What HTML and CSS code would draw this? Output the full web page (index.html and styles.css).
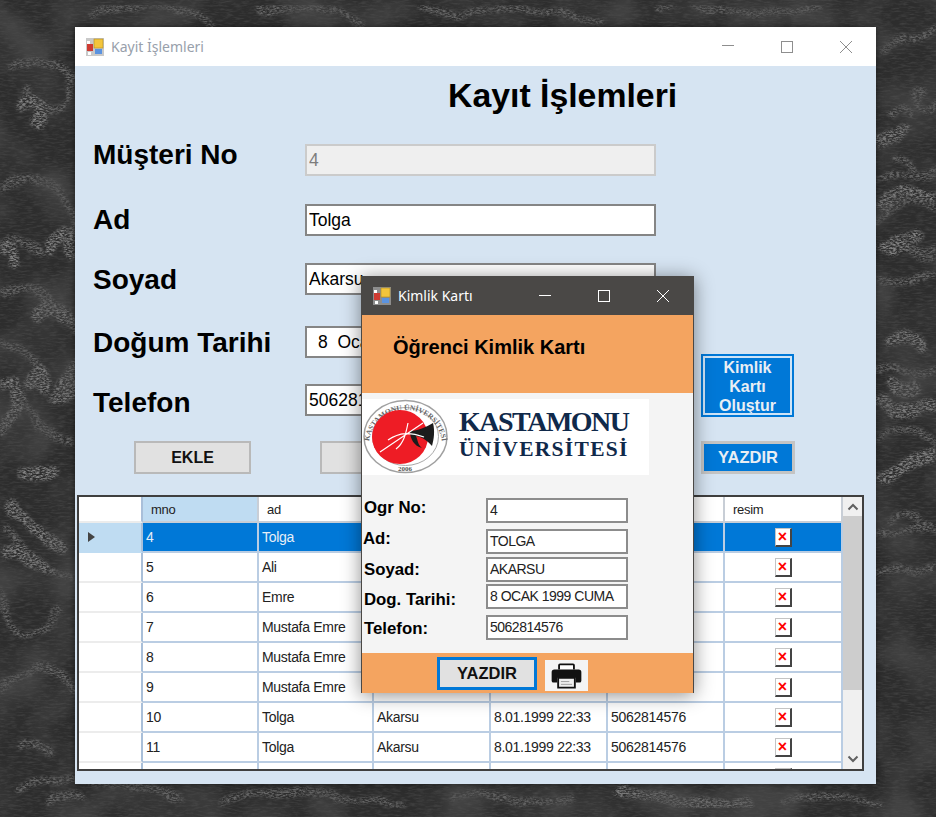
FILE: index.html
```html
<!DOCTYPE html>
<html lang="tr">
<head>
    <meta charset="UTF-8">
    <title>Kayıt İşlemleri</title>
    <link rel="stylesheet" href="styles.css">
</head>
<body>
    <!-- wallpaper -->
    <svg class="wallpaper" viewBox="0 0 936 817" aria-hidden="true">
        <defs>
            <filter id="grain" x="0" y="0" width="100%" height="100%">
                <feTurbulence type="fractalNoise" baseFrequency="0.03" numOctaves="2" seed="4" result="wobble"/>
                <feDisplacementMap in="SourceGraphic" in2="wobble" scale="16" xChannelSelector="R" yChannelSelector="G" result="moved"/>
                <feGaussianBlur in="moved" stdDeviation="1.8" result="soft"/>
                <feTurbulence type="fractalNoise" baseFrequency="0.3 0.75" numOctaves="3" seed="9"/>
                <feColorMatrix values="0 0 0 0 1  0 0 0 0 1  0 0 0 0 1  3 0 0 0 -1.1" result="streak"/>
                <feComposite in="soft" in2="streak" operator="in"/>
            </filter>
            <filter id="cloth" x="0" y="0" width="100%" height="100%">
                <feTurbulence type="fractalNoise" baseFrequency="0.12 0.55" numOctaves="3" seed="3"/>
                <feColorMatrix values="0 0 0 0 0.6  0 0 0 0 0.6  0 0 0 0 0.6  1.2 0 0 0 -0.5"/>
            </filter>
            <filter id="shade" x="0" y="0" width="100%" height="100%">
                <feTurbulence type="fractalNoise" baseFrequency="0.018" numOctaves="2" seed="12"/>
                <feColorMatrix values="0 0 0 0 0.08  0 0 0 0 0.08  0 0 0 0 0.08  3 0 0 0 -1.2"/>
            </filter>
        </defs>
        <rect width="936" height="817" filter="url(#cloth)" opacity="0.22"/>
        <g class="swirls" filter="url(#grain)">
            <path d="M10 72C40 52 78 58 70 98 58 118 28 112 24 88"/>
            <path d="M0 190C30 160 70 180 75 240"/>
            <path class="wide" d="M20 108C34 96 50 100 40 120"/>
            <path d="M5 240C18 232 34 240 40 252"/>
            <path class="wide" d="M50 248C62 226 72 232 74 250"/>
            <path class="wide" d="M0 245C12 240 16 250 14 262"/>
            <path d="M0 292C24 282 60 300 74 330"/>
            <path class="wide" d="M38 314C46 300 62 306 68 318"/>
            <path d="M3 345C20 350 38 362 50 380"/>
            <path class="wide" d="M0 386C12 380 26 392 20 406"/>
            <path class="wide" d="M32 380C40 366 48 372 44 386"/>
            <path class="wide" d="M58 395L72 372V396Z"/>
            <path class="wide" d="M2 430C16 416 20 396 14 382"/>
            <path d="M22 400C30 420 38 440 70 440"/>
            <path class="wide" d="M22 472C34 474 46 474 54 470"/>
            <path class="wide" d="M12 506C20 520 40 530 60 545"/>
            <path d="M6 528C24 560 50 570 74 580"/>
            <path class="wide" d="M8 556C20 556 36 562 44 568"/>
            <path d="M0 590C10 640 30 650 60 610"/>
            <path d="M0 690C30 660 60 660 74 690"/>
            <path d="M20 745C34 738 46 744 52 752"/>
            <path d="M50 800C60 794 70 796 78 800"/>
            <path d="M90 14C130 0 180 4 210 26"/>
            <path d="M260 10C300 2 330 6 360 24"/>
            <path d="M420 8C480 20 540 4 600 20"/>
            <path d="M660 6C700 0 760 24 820 8"/>
            <path d="M885 48C900 30 920 40 936 28"/>
            <path class="wide" d="M885 140C895 134 902 132 900 130"/>
            <path d="M922 92C908 96 920 118 936 104"/>
            <path d="M890 112C900 106 908 108 908 112"/>
            <path d="M880 178C900 176 920 176 936 170"/>
            <path d="M895 160C905 156 915 160 915 170"/>
            <path class="wide" d="M884 200C900 192 920 192 930 196"/>
            <path d="M880 222C900 190 925 200 936 210"/>
            <path d="M880 250C910 240 920 256 936 245"/>
            <path class="wide" d="M884 250C896 244 904 240 916 232"/>
            <path d="M905 235C915 260 925 262 936 254"/>
            <path d="M880 280C910 286 920 280 936 276"/>
            <path class="wide" d="M890 340C905 334 918 340 920 344"/>
            <path d="M880 372C900 360 910 380 936 370"/>
            <path class="wide" d="M885 400C900 420 920 410 936 404"/>
            <path d="M880 440C900 420 920 430 936 444"/>
            <path class="wide" d="M895 382C905 396 915 396 912 386"/>
            <path d="M890 520C900 510 915 512 920 520"/>
            <path d="M880 530C910 540 925 520 936 530"/>
            <path d="M880 575C910 555 920 585 936 565"/>
            <path class="wide" d="M884 474C900 470 920 462 934 456"/>
            <path d="M20 790C70 770 130 780 180 800"/>
            <path d="M220 800C290 786 340 796 400 806"/>
            <path d="M450 795C490 790 520 806 570 800"/>
            <path class="wide" d="M620 790C660 794 700 806 750 808"/>
            <path d="M780 800C820 790 850 800 880 806"/>
        </g>
        <rect width="936" height="817" filter="url(#shade)" opacity="0.6"/>
    </svg>

    <section class="window main-window">
        <div class="titlebar">
            <svg class="app-icon" viewBox="0 0 18 18"><rect width="18" height="18" fill="#c9c9c9"/><rect x="1" y="3" width="3" height="3" fill="#fff"/><rect x="8" y="1" width="9" height="9" fill="#f3c53c" stroke="#b08a20" stroke-width=".6"/><rect x="1" y="6" width="6" height="7" fill="#cf3b32"/><rect x="9" y="11" width="7" height="5" fill="#5b93e0"/><rect x="2" y="14" width="3" height="3" fill="#fff"/></svg>
            <span class="window-title">Kayit İşlemleri</span>
            <div class="window-controls">
                <svg viewBox="0 0 12 12"><path d="M0 4.500H12"/></svg>
                <svg viewBox="0 0 12 12"><rect x=".5" y=".5" width="11" height="11"/></svg>
                <svg viewBox="0 0 12 12"><path d="M0 0L12 12M12 0L0 12"/></svg>
            </div>
        </div>

        <div class="window-body">
            <h1 class="form-title">Kayıt İşlemleri</h1>

            <div class="form-grid">
                <label class="field-label label-no">Müşteri No</label>
                <input class="field-input" type="text" value="4" disabled>

                <label class="field-label">Ad</label>
                <input class="field-input" type="text" value="Tolga">

                <label class="field-label label-low">Soyad</label>
                <input class="field-input" type="text" value="Akarsu">

                <label class="field-label label-low">Doğum Tarihi</label>
                <input class="field-input input-date" type="text" value="8  Ocak 1999 Cuma">

                <label class="field-label label-phone">Telefon</label>
                <input class="field-input" type="text" value="5062814576">

                <button class="btn-blue btn-card">Kimlik Kartı Oluştur</button>
            </div>

            <div class="button-row">
                <button class="btn-gray btn-add">EKLE</button>
                <button class="btn-gray btn-update"></button>
                <button class="btn-blue btn-print">YAZDIR</button>
            </div>

            <div class="data-grid">
                <table>
                    <colgroup>
                        <col class="col-head">
                        <col class="col-mno">
                        <col class="col-ad">
                        <col class="col-data">
                        <col class="col-data">
                        <col class="col-data">
                        <col class="col-img">
                    </colgroup>
                    <thead>
                        <tr>
                            <th class="row-head"></th>
                            <th class="active-col">mno</th>
                            <th>ad</th>
                            <th></th>
                            <th></th>
                            <th></th>
                            <th>resim</th>
                        </tr>
                    </thead>
                    <tbody>
                        <tr class="selected">
                            <td class="row-head"><span class="row-arrow"></span></td>
                            <td>4</td><td>Tolga</td><td></td><td></td><td></td>
                            <td class="img-cell"><span class="no-image">×</span></td>
                        </tr>
                        <tr>
                            <td class="row-head"></td>
                            <td>5</td><td>Ali</td><td></td><td></td><td></td>
                            <td class="img-cell"><span class="no-image">×</span></td>
                        </tr>
                        <tr>
                            <td class="row-head"></td>
                            <td>6</td><td>Emre</td><td></td><td></td><td></td>
                            <td class="img-cell"><span class="no-image">×</span></td>
                        </tr>
                        <tr>
                            <td class="row-head"></td>
                            <td>7</td><td>Mustafa Emre</td><td></td><td></td><td></td>
                            <td class="img-cell"><span class="no-image">×</span></td>
                        </tr>
                        <tr>
                            <td class="row-head"></td>
                            <td>8</td><td>Mustafa Emre</td><td></td><td></td><td></td>
                            <td class="img-cell"><span class="no-image">×</span></td>
                        </tr>
                        <tr>
                            <td class="row-head"></td>
                            <td>9</td><td>Mustafa Emre</td><td></td><td></td><td></td>
                            <td class="img-cell"><span class="no-image">×</span></td>
                        </tr>
                        <tr>
                            <td class="row-head"></td>
                            <td>10</td><td>Tolga</td><td>Akarsu</td><td>8.01.1999 22:33</td><td>5062814576</td>
                            <td class="img-cell"><span class="no-image">×</span></td>
                        </tr>
                        <tr>
                            <td class="row-head"></td>
                            <td>11</td><td>Tolga</td><td>Akarsu</td><td>8.01.1999 22:33</td><td>5062814576</td>
                            <td class="img-cell"><span class="no-image">×</span></td>
                        </tr>
                        <tr>
                            <td class="row-head"></td>
                            <td></td><td></td><td></td><td></td><td></td>
                            <td class="img-cell"><span class="no-image"></span></td>
                        </tr>
                    </tbody>
                </table>
                <div class="scrollbar">
                    <svg viewBox="0 0 12 8"><path d="M1.500 6.500L6 2l4.500 4.500"/></svg>
                    <div class="scroll-track"><div class="scroll-thumb"></div></div>
                    <svg viewBox="0 0 12 8"><path d="M1.500 1.500L6 6l4.500-4.500"/></svg>
                </div>
            </div>
        </div>
    </section>

    <section class="window card-window">
        <div class="titlebar">
            <svg class="app-icon" viewBox="0 0 18 18"><rect width="18" height="18" fill="#8d8d8d"/><rect x="1" y="3" width="3" height="3" fill="#fff"/><rect x="8" y="1" width="9" height="9" fill="#f3c53c" stroke="#b08a20" stroke-width=".6"/><rect x="1" y="6" width="6" height="7" fill="#cf3b32"/><rect x="9" y="11" width="7" height="5" fill="#5b93e0"/><rect x="2" y="14" width="3" height="3" fill="#fff"/></svg>
            <span class="window-title">Kimlik Kartı</span>
            <div class="window-controls">
                <svg viewBox="0 0 12 12"><path d="M0 5.500H12"/></svg>
                <svg viewBox="0 0 12 12"><rect x=".5" y=".5" width="11" height="11"/></svg>
                <svg viewBox="0 0 12 12"><path d="M0 0L12 12M12 0L0 12"/></svg>
            </div>
        </div>

        <div class="card-head">Öğrenci Kimlik Kartı</div>

        <div class="card-body">
            <div class="logo">
                <svg class="seal" viewBox="0 0 86 76">
                    <defs>
                        <path id="sealArc" d="M7 46A36.500 35 0 0 1 80 46"/>
                    </defs>
                    <ellipse cx="43.500" cy="37.500" rx="41.500" ry="36" fill="#fff" stroke="#a0a0a0" stroke-width="1.500"/>
                    <ellipse cx="43.500" cy="37.500" rx="33" ry="29" fill="#fff" stroke="#a8a8a8"/>
                    <text class="seal-text"><textPath href="#sealArc" startOffset="50%" text-anchor="middle">KASTAMONU ÜNİVERSİTESİ</textPath></text>
                    <text class="seal-year" x="43" y="72" text-anchor="middle">2006</text>
                    <ellipse cx="38" cy="38" rx="28" ry="27" fill="#ee1c25"/>
                    <path d="M48 32C56 32 64 28 71 24 73 32 72 40 70 47 66 42 60 38 54 37 56 42 56 46 60 49 52 47 48 40 48 32Z" fill="#1c1c1c"/>
                    <path d="M18 53L61 24M26 41C38 33 48 33 62 38M46 24C44 34 42 44 34 50" fill="none" stroke="#fff" stroke-width="1.200"/>
                </svg>
                <div class="logo-text">
                    <div class="logo-line1">KASTAMONU</div>
                    <div class="logo-line2">ÜNİVERSİTESİ</div>
                </div>
            </div>

            <div class="card-fields">
                <div class="card-row row-no"><label>Ogr No:</label><div class="card-value">4</div></div>
                <div class="card-row row-name"><label>Ad:</label><div class="card-value">TOLGA</div></div>
                <div class="card-row row-surname"><label>Soyad:</label><div class="card-value">AKARSU</div></div>
                <div class="card-row row-date"><label>Dog. Tarihi:</label><div class="card-value">8 OCAK 1999 CUMA</div></div>
                <div class="card-row row-phone"><label>Telefon:</label><div class="card-value">5062814576</div></div>
            </div>
        </div>

        <div class="card-foot">
            <button class="btn-gray btn-card-print">YAZDIR</button>
            <div class="print-icon">
                <svg viewBox="0 0 34 28">
                    <path d="M9 7V2.500A1 1 0 0 1 10 1.500H24A1 1 0 0 1 25 2.500V7" fill="#fff" stroke="#111" stroke-width="2"/>
                    <path d="M4 7H30A3 3 0 0 1 33 10V19A2 2 0 0 1 31 21H27V16H7V21H3A2 2 0 0 1 1 19V10A3 3 0 0 1 4 7Z" fill="#111"/>
                    <path d="M8 16H26V26.500H8Z" fill="#eee" stroke="#111" stroke-width="2"/>
                    <path d="M11 20H20M11 23H23" stroke="#999"/>
                </svg>
            </div>
        </div>
    </section>
</body>
</html>
```

FILE: styles.css
```css
* {
    margin: 0;
    padding: 0;
    box-sizing: border-box;
}

html, body {
    width: 936px;
    height: 817px;
    overflow: hidden;
}

body {
    position: relative;
    background-color: #2d2d2d;
    font-family: "Liberation Sans", Arial, sans-serif;
    color: #000;
}

.wallpaper {
    position: absolute;
    left: 0;
    top: 0;
    width: 936px;
    height: 817px;
}

.swirls {
    opacity: 0.6;
}

.swirls path {
    fill: none;
    stroke: #8c8c8c;
    stroke-width: 8;
    stroke-linecap: round;
}

.swirls path.wide {
    stroke: #b8b8b8;
    stroke-width: 13;
}

/* windows */
.window {
    position: absolute;
    display: flex;
    flex-direction: column;
}

.main-window {
    left: 75px;
    top: 27px;
    width: 801px;
    height: 757px;
    background-color: #d6e4f2;
    box-shadow: 0 0 6px rgba(0,0,0,0.5);
}

.card-window {
    left: 361px;
    top: 276px;
    width: 333px;
    height: 417px;
    background-color: #f4f4f4;
    border: 1px solid #4a4846;
    border-width: 0 1px;
    box-shadow: 0 2px 18px rgba(0,0,0,0.45);
}

.titlebar {
    height: 39px;
    flex-shrink: 0;
    display: flex;
    align-items: center;
    padding-left: 11px;
    background-color: #fff;
    font-size: 14px;
    font-family: "Noto Sans", "Open Sans", sans-serif;
}

.app-icon {
    width: 18px;
    height: 18px;
    margin-right: 7px;
}

.window-title {
    color: #98a0ab;
}

.window-controls {
    margin-left: auto;
    display: flex;
    align-items: center;
    padding-right: 24px;
}

.window-controls svg {
    width: 12px;
    height: 12px;
    margin-left: 47px;
    fill: none;
    stroke: #8e8e8e;
    stroke-width: 1;
}

.card-window .titlebar {
    background-color: #4a4846;
}

.card-window .window-title {
    color: #fff;
}

.card-window .window-controls svg {
    stroke: #fff;
}

/* main form */
.window-body {
    flex: 1;
    padding: 0 12px 13px 2px;
    display: flex;
    flex-direction: column;
}

.form-title {
    margin: 8px 0 0 371px;
    height: 43px;
    font-size: 33.800px;
    line-height: 43px;
    font-weight: bold;
    white-space: nowrap;
}

.form-grid {
    display: grid;
    grid-template-columns: 212px 351px 45px 93px;
    grid-template-rows: 60px 59px 63px 58px 32px;
    margin-top: 27px;
    margin-left: 16px;
}

.field-label {
    grid-column: 1;
    font-size: 28px;
    font-weight: bold;
    line-height: 32px;
    white-space: nowrap;
}

.label-no {
    margin-top: -5px;
}

.label-low {
    margin-top: 1px;
}

.label-phone {
    margin-top: 3px;
}

.field-input {
    grid-column: 2;
    height: 32px;
    padding: 0 2px;
    border: 2px solid #858585;
    background-color: #fff;
    font-family: "Liberation Sans", Arial, sans-serif;
    font-size: 17.500px;
    color: #000;
}

.field-input:disabled {
    background-color: #efefef;
    border-color: #cbcbcb;
    color: #7d7d7d;
}

.input-date {
    padding-left: 11px;
    white-space: pre;
}

.btn-card {
    grid-column: 4;
    grid-row: 4 / 6;
    margin-top: 28px;
    height: 63px;
    padding: 2px 6px;
    line-height: 19px;
}

.btn-blue {
    background-color: #0078d7;
    color: #e9eef4;
    border: 2px solid #0078d7;
    outline: 2px solid #cfe4f7;
    outline-offset: -4px;
    font-family: "Liberation Sans", Arial, sans-serif;
    font-size: 16px;
    font-weight: bold;
}

.btn-gray {
    background-color: #e1e1e1;
    border: 2px solid #b9b9b9;
    font-family: "Liberation Sans", Arial, sans-serif;
    font-size: 16px;
    font-weight: bold;
    color: #111;
}

.button-row {
    display: flex;
    margin-top: 25px;
    margin-left: 57px;
    height: 33px;
}

.btn-add {
    width: 117px;
}

.btn-update {
    width: 117px;
    margin-left: 69px;
}

.btn-print {
    width: 94px;
    margin-left: 264px;
    border: 3px solid #c4c4c4;
    outline: 1px solid #0078d7;
    outline-offset: -4px;
    font-size: 16.500px;
}

/* data grid */
.data-grid {
    display: flex;
    margin-top: 21px;
    width: 787px;
    height: 276px;
    border: 2px solid #3f3f3f;
    background-color: #fff;
    overflow: hidden;
}

.data-grid table {
    width: 764px;
    flex-shrink: 0;
    border-collapse: separate;
    border-spacing: 0;
    table-layout: fixed;
    font-size: 14px;
    letter-spacing: -0.3px;
    color: #222;
}

.col-head { width: 64px; }
.col-mno { width: 116px; }
.col-ad { width: 115px; }
.col-data { width: 117px; }
.col-img { width: 118px; }

.data-grid th,
.data-grid td {
    height: 30px;
    padding: 0 0 0 3px;
    border: 2px solid #bacde3;
    border-width: 0 2px 2px 0;
    text-align: left;
    font-weight: normal;
    white-space: nowrap;
    overflow: hidden;
}

.data-grid th {
    height: 26px;
    padding-left: 8px;
    background-color: #fff;
    border-color: #c8ced6;
    font-size: 13px;
}

.data-grid th.active-col {
    background-color: #bfdcf2;
}

.data-grid th.row-head,
.data-grid td.row-head {
    border-right-color: #a9bfd9;
    border-bottom-color: #ececec;
}

.data-grid tr.selected td {
    background-color: #0078d7;
    color: #e6eef6;
}

.data-grid tr.selected td.row-head {
    background-color: #bfdcf2;
    border-bottom-color: #bfdcf2;
}

.row-arrow {
    display: block;
    margin-left: 6px;
    width: 0;
    height: 0;
    border-left: 7px solid #444;
    border-top: 5px solid transparent;
    border-bottom: 5px solid transparent;
}

.data-grid td.img-cell {
    padding: 0;
    text-align: center;
}

.no-image {
    display: inline-block;
    width: 17px;
    height: 19px;
    vertical-align: middle;
    background-color: #fff;
    border: 1px solid #c4c4c4;
    border-right: 2px solid #444;
    border-bottom: 2px solid #444;
    color: #f00;
    font-size: 16px;
    font-weight: bold;
    line-height: 15px;
    letter-spacing: 0;
}

.scrollbar {
    flex: 1;
    display: flex;
    flex-direction: column;
    align-items: center;
    background-color: #f0f0f0;
}

.scrollbar svg {
    width: 12px;
    height: 8px;
    margin: 6px 0;
    flex-shrink: 0;
    fill: none;
    stroke: #606060;
    stroke-width: 2;
}

.scroll-track {
    flex: 1;
    width: 100%;
}

.scroll-thumb {
    height: 174px;
    margin-top: -1px;
    background-color: #cdcdcd;
}

/* kimlik karti */
.card-head {
    height: 78px;
    flex-shrink: 0;
    padding: 21px 0 0 31px;
    background-color: #f4a460;
    font-size: 20px;
    font-weight: bold;
}

.card-body {
    flex: 1;
    display: flex;
    flex-direction: column;
}

.logo {
    width: 287px;
    height: 76px;
    margin-top: 6px;
    display: flex;
    align-items: center;
    background-color: #fff;
}

.seal {
    width: 86px;
    height: 76px;
    flex-shrink: 0;
}

.seal-text {
    font-family: "Liberation Serif", serif;
    font-size: 7.500px;
    font-weight: bold;
    fill: #666;
}

.seal-year {
    font-family: "Liberation Serif", serif;
    font-size: 7px;
    font-weight: bold;
    fill: #555;
}

.logo-text {
    margin-left: 11px;
    margin-top: -6px;
    font-family: "Liberation Serif", serif;
    font-weight: bold;
    color: #10294a;
    white-space: nowrap;
}

.logo-line1 {
    font-size: 28px;
    line-height: 30px;
    letter-spacing: -1.500px;
}

.logo-line2 {
    font-size: 21.500px;
    line-height: 24px;
    letter-spacing: 1.300px;
}

.card-fields {
    margin-top: 23px;
}

.card-row {
    display: flex;
    height: 25px;
}

.card-row label {
    width: 124px;
    padding-left: 2px;
    font-size: 16.800px;
    font-weight: bold;
    line-height: 20px;
    white-space: nowrap;
}

.card-value {
    width: 142px;
    height: 25px;
    padding-left: 2px;
    border: 2px solid #8c8c8c;
    background-color: #fff;
    font-size: 14px;
    line-height: 21px;
    letter-spacing: -0.5px;
    color: #222;
    white-space: nowrap;
}

.row-name {
    margin-top: 6px;
}

.row-name label {
    padding-left: 1px;
}

.row-surname {
    margin-top: 3px;
}

.row-surname label {
    padding-top: 3px;
}

.row-date {
    margin-top: 2px;
}

.row-date label {
    padding-top: 6px;
}

.row-phone {
    margin-top: 6px;
}

.row-phone label {
    padding-top: 4px;
}

.card-foot {
    height: 40px;
    flex-shrink: 0;
    display: flex;
    align-items: center;
    padding-left: 75px;
    background-color: #f4a460;
}

.btn-card-print {
    width: 100px;
    height: 33px;
    border: 3px solid #0078d7;
    font-size: 16.500px;
}

.print-icon {
    width: 43px;
    height: 31px;
    margin: 5px 0 0 8px;
    display: flex;
    align-items: center;
    justify-content: center;
    background-color: #f4f4f4;
}

.print-icon svg {
    width: 33px;
    height: 26px;
}
```
